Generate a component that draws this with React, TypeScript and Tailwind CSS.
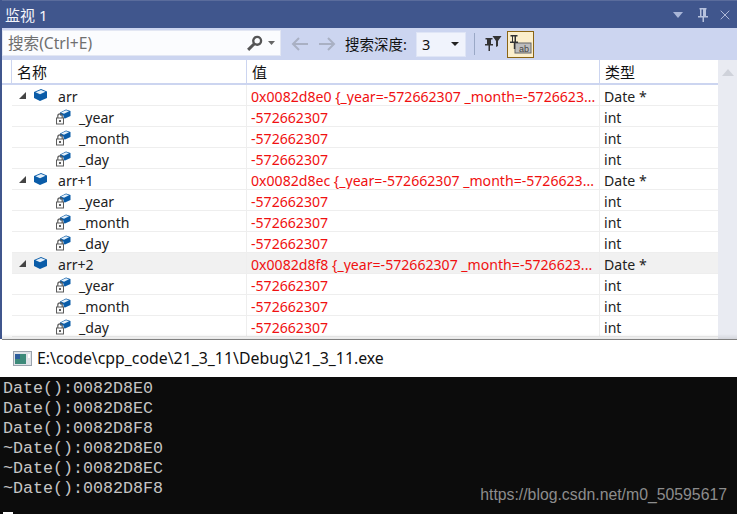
import React from "react";
import { X } from "lucide-react";

const ui = { fontFamily: '"Noto Sans","Noto Sans CJK SC",sans-serif' };

function Obj() {
  return (
    <svg width="15" height="14" viewBox="0 0 15 14" className="shrink-0 ml-[7px]">
      <path d="M1 4 8 1l6 2.5v6.500L7 13l-6-3z" fill="#0a5ca8" />
      <path d="M2.500 4.200 8 2l4.500 1.800L7 6.200z" fill="#e4f0fa" />
    </svg>
  );
}

function Member() {
  return (
    <svg width="15" height="17" viewBox="0 0 15 17" className="shrink-0">
      <path d="M4 4.500 10 1.500l4.500 1.500v5L9 10.500 7.500 10V7.500H4z" fill="#0a5ca8" />
      <path d="M5 4.500 10 2.300l3 1L8 5.800z" fill="#e4f0fa" />
      <path d="M1.800 10V8a2.200 2.200 0 0 1 4.400 0V10" fill="none" stroke="#5c5c5c" strokeWidth="1.200" />
      <rect x="0.500" y="10" width="7" height="6" fill="#fbfbfb" stroke="#5c5c5c" />
      <rect x="3" y="12" width="2" height="2" fill="#5c5c5c" />
    </svg>
  );
}

const longVal = (a: string) => `${a} {_year=-572662307 _month=-5726623...`;

const rows = [
  { n: "arr", v: longVal("0x0082d8e0"), t: "Date *", top: true },
  { n: "_year", v: "-572662307", t: "int" },
  { n: "_month", v: "-572662307", t: "int" },
  { n: "_day", v: "-572662307", t: "int" },
  { n: "arr+1", v: longVal("0x0082d8ec"), t: "Date *", top: true },
  { n: "_year", v: "-572662307", t: "int" },
  { n: "_month", v: "-572662307", t: "int" },
  { n: "_day", v: "-572662307", t: "int" },
  { n: "arr+2", v: longVal("0x0082d8f8"), t: "Date *", top: true, hl: true },
  { n: "_year", v: "-572662307", t: "int" },
  { n: "_month", v: "-572662307", t: "int" },
  { n: "_day", v: "-572662307", t: "int" },
];

const lines = ["Date():0082D8E0", "Date():0082D8EC", "Date():0082D8F8", "~Date():0082D8E0", "~Date():0082D8EC", "~Date():0082D8F8"];

export default function App() {
  return (
    <div className="relative w-[737px] h-[514px] overflow-hidden bg-white text-[14.100px] leading-[20px]" style={ui}>
      <div className="relative h-[339px] flex flex-col border-l-2 border-[#40568d] overflow-hidden">
        <div className="h-[28px] shrink-0 bg-[#40568d] flex items-center pl-[3px] pr-[3px] text-[#f3f5fb] text-[15px] border-t border-[#5a6c9c]">
          <span>监视 1</span>
          <svg width="10" height="6" viewBox="0 0 10 6" className="ml-auto mr-[5px]"><path d="M0 0h10L5 6z" fill="#a9b6d8" /></svg>
          <svg width="12" height="16" viewBox="0 0 12 16" className="ml-[9px]">
            <path d="M2.500 1h7v1.500H9V9h2v1.500H7V15H5.500v-4.500H1V9h2V2.500h-.5zM4.500 2.500V9h1.500V2.500z" fill="#b7c2de" />
          </svg>
          <X size={16} strokeWidth={1.4} color="#b7c2de" className="ml-[8px] mr-[1px]" />
        </div>
        <div className="h-[32px] shrink-0 bg-[#ccd5f0] flex items-center text-[#111]">
          <div className="w-[279px] h-[26px] bg-[#fbfcfe] border border-[#e3e7f3] flex items-center pl-[5px] pr-[3px] text-[#6f6f6f] text-[15.600px] mb-[2px]">
            <span>搜索(Ctrl+E)</span>
            <svg width="17" height="17" viewBox="0 0 16 16" className="ml-auto">
              <circle cx="10.500" cy="5.500" r="3.700" fill="none" stroke="#555" strokeWidth="2.200" />
              <path d="M7.800 8.200 2 14" stroke="#555" strokeWidth="2.800" />
            </svg>
            <svg width="7" height="4" viewBox="0 0 7 4" className="ml-[5px] mr-[2px]"><path d="M0 0h7L3.500 4z" fill="#666" /></svg>
          </div>
          <svg width="18" height="14" viewBox="0 0 18 14" className="ml-[10px] mb-[1px]"><path d="M8 1 2 7l6 6M2 7h15" fill="none" stroke="#a9b0c3" strokeWidth="2" /></svg>
          <svg width="18" height="14" viewBox="0 0 18 14" className="ml-[9px] mb-[1px]"><path d="M10 1l6 6-6 6M16 7H1" fill="none" stroke="#a9b0c3" strokeWidth="2" /></svg>
          <span className="ml-[9px] text-[14.500px]">搜索深度:</span>
          <div className="ml-[9px] w-[50px] h-[25px] bg-[#f0f3fc] border border-[#dfe5f6] flex items-center pl-[5px] pr-[6px] text-[14.500px]">
            <span>3</span>
            <svg width="8" height="4" viewBox="0 0 8 4" className="ml-auto"><path d="M0 0h8L4 4z" fill="#222" /></svg>
          </div>
          <div className="ml-[8px] w-px h-[22px] bg-[#9aa8c6]" />
          <svg width="18" height="18" viewBox="0 0 18 18" className="ml-[9px]">
            <path d="M1.500 3h7v1.500H7V9h2v1.500H6V16H4.500v-5.500H1V9h2V4.500H1.500z" fill="#333" />
            <path d="M8.500 1h9l-3.500 5v5l-2 1V6z" fill="#333" />
          </svg>
          <div className="ml-[5px] w-[27px] h-[27px] bg-[#fbeecb] border border-[#8a6414] flex items-center justify-center">
            <svg width="23" height="21" viewBox="0 0 23 21">
              <rect x="6" y="9" width="16" height="10" fill="#bdbdbd" stroke="#666" />
              <text x="10" y="17.500" fontSize="9" fill="#444" fontFamily="Liberation Sans, sans-serif">ab</text>
              <path d="M1.500 1h7v1.500H7V7.500h2V9H6.200v6H4.800V9H1V7.500h2V2.500H1.500zM4 2.500v5h1.500v-5z" fill="#333" />
            </svg>
          </div>
        </div>
        <div className="flex-1 flex min-h-0">
          <div className="flex-1 bg-white">
            <div className="h-[25px] flex border-b-2 border-[#ccd5f0] text-[15px] text-[#111]">
              <div className="w-[10px] border-r border-[#ccd5f0] bg-white" />
              <div className="w-[235px] border-r border-[#ccd5f0] pl-[5px] flex items-center">名称</div>
              <div className="w-[353px] border-r border-[#ccd5f0] pl-[5px] flex items-center">值</div>
              <div className="flex-1 pl-[5px] flex items-center">类型</div>
            </div>
            {rows.map((r, i) => (
              <div key={i} className="h-[21px] flex">
                <div className="w-[10px]" />
                <div className={`w-[235px] border-r border-b border-[#eeeeee] flex items-center ${r.hl ? "bg-[#f1f1f1]" : ""}`}>
                  {r.top ? (
                    <>
                      <svg width="7" height="7" viewBox="0 0 7 7" className="ml-[7px] mt-[1px]"><path d="M7 0v7H0z" fill="#444" /></svg>
                      <Obj />
                      <span className="ml-[10px] pt-[3px] text-[#222]">{r.n}</span>
                    </>
                  ) : (
                    <>
                      <div className="ml-[44px]"><Member /></div>
                      <span className="ml-[8px] pt-[3px] text-[#222]">{r.n}</span>
                    </>
                  )}
                </div>
                <div className={`w-[353px] border-r border-b border-[#eeeeee] pl-[4px] pt-[3px] flex items-center text-[#f01010] whitespace-nowrap overflow-hidden ${r.hl ? "bg-[#f1f1f1]" : ""}`}>{r.v}</div>
                <div className={`flex-1 border-b border-[#eeeeee] pl-[4px] pt-[3px] flex items-center text-[#222] ${r.hl ? "bg-[#f1f1f1]" : ""}`}>{r.t}</div>
              </div>
            ))}
          </div>
          <div className="w-[19px] bg-[#e9ebf2] shrink-0 flex justify-center pt-[9px]">
            <svg width="12" height="7" viewBox="0 0 12 7"><path d="M0 7 6 0l6 7z" fill="#cfd2da" /></svg>
          </div>
        </div>
        <div className="absolute left-0 right-0 bottom-0 h-[5px] bg-gradient-to-b from-transparent to-[#00000018]" />
      </div>
      <div className="h-[38px] bg-white border-t border-[#808080] ml-[2px] flex items-center pl-[11px] pb-[1px] text-[#111] text-[15.850px]">
        <svg width="19" height="15" viewBox="0 0 19 15" className="shrink-0">
          <rect x="0.500" y="0.500" width="18" height="14" fill="#dfe3e8" stroke="#9aa3ad" />
          <rect x="2" y="3" width="11" height="10" fill="#3d8a7a" />
          <rect x="2" y="3" width="5" height="5" fill="#2c5d9c" />
          <rect x="15" y="3" width="2" height="4" fill="#fff" />
        </svg>
        <span className="ml-[5px] whitespace-nowrap">E:\code\cpp_code\21_3_11\Debug\21_3_11.exe</span>
      </div>
      <div className="relative h-[137px] bg-[#0c0c0c] pt-[2px] pl-[3px] text-[#c5c5c5] text-[16.670px] leading-[20px]" style={{ fontFamily: '"Liberation Mono",monospace' }}>
        {lines.map((l) => (
          <div key={l} className="whitespace-pre">{l}</div>
        ))}
        <div className="absolute left-[3px] bottom-0 w-[10px] h-[2px] bg-white" />
        <span className="absolute right-[10px] bottom-[9px] text-[#8d8d8d] text-[15.800px] leading-[20px]" style={{ fontFamily: '"Liberation Sans",sans-serif' }}>https://blog.csdn.net/m0_50595617</span>
      </div>
    </div>
  );
}
